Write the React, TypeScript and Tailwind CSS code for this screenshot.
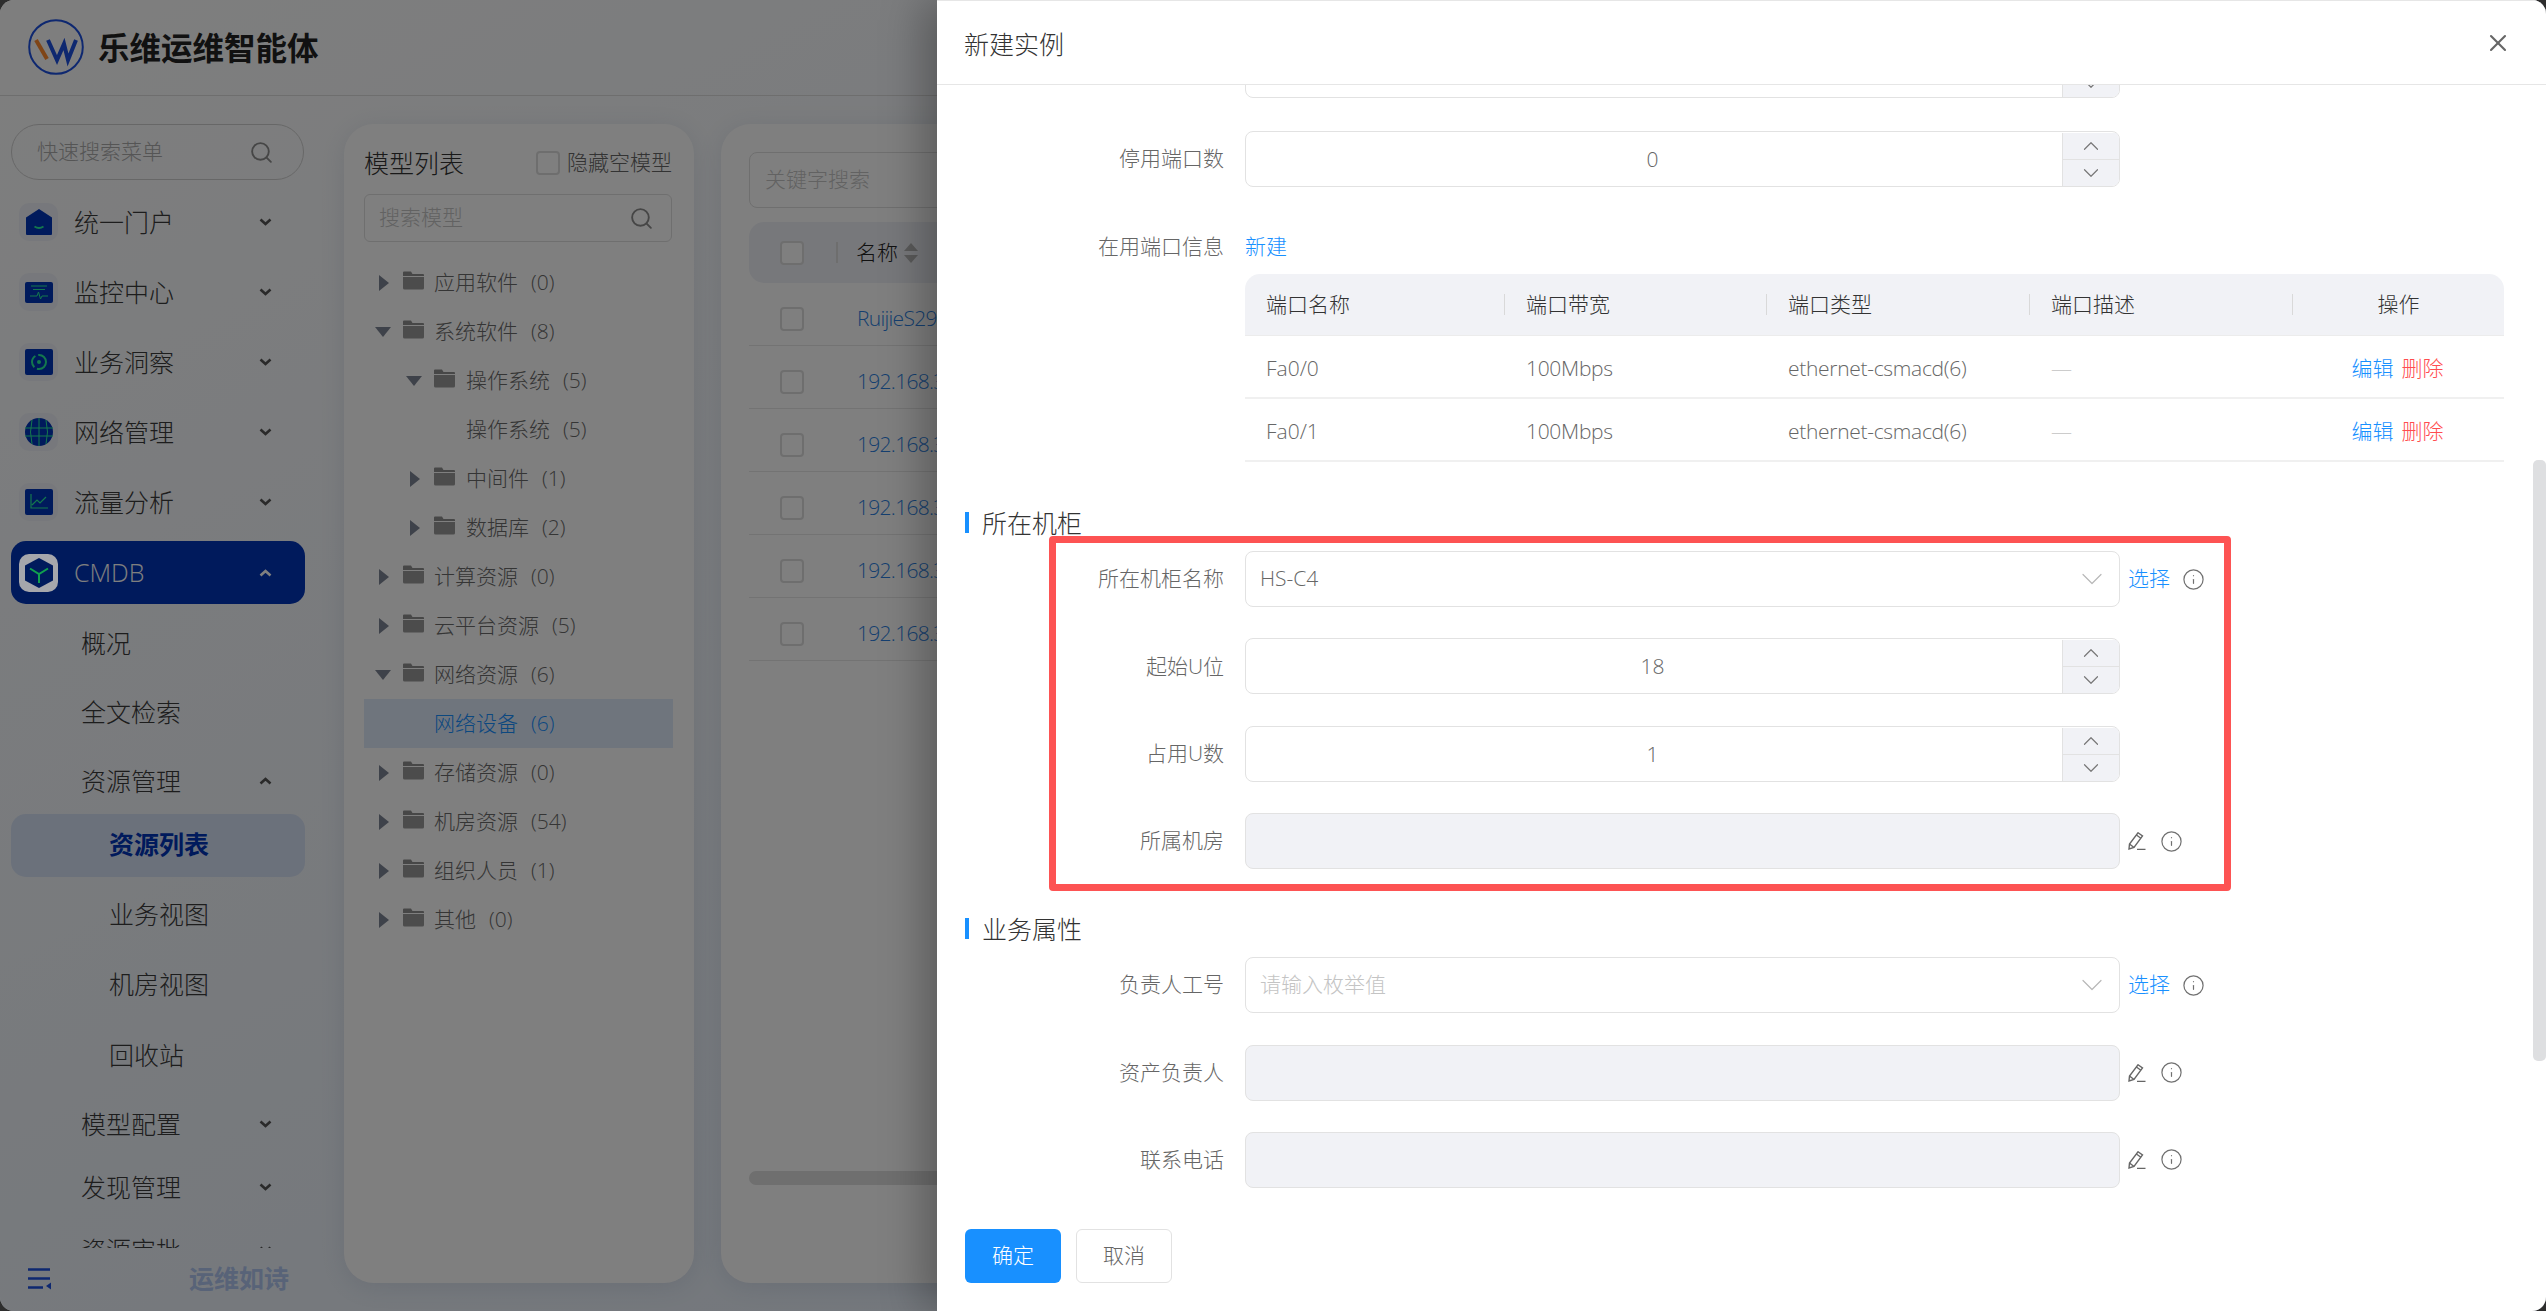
import React from 'react';
import { ChevronDown, ChevronUp, Info, Search, X } from 'lucide-react';

const Caret = ({ open }: { open?: boolean }) =>
  open ? (
    <svg width="16" height="10" viewBox="0 0 16 10" className="ml-[-4px]"><path d="M0 0h16L8 10z" fill="#7d8594" /></svg>
  ) : (
    <svg width="10" height="16" viewBox="0 0 10 16"><path d="M0 0l10 8-10 8z" fill="#7d8594" /></svg>
  );

const Folder = () => (
  <svg width="21" height="20" viewBox="0 0 21 20" className="mt-[-6px] shrink-0">
    <path d="M1 1.500h7l1.500 2.500H20a1 1 0 0 1 1 1v1H0V2.500a1 1 0 0 1 1-1z" fill="#8f8f8f" />
    <path d="M0 7h21v11a1.500 1.500 0 0 1-1.500 1.500h-18A1.500 1.500 0 0 1 0 18z" fill="#989898" />
  </svg>
);

function TreeItem({ label, count, level = 0, open, leaf, active }: { label: string; count: number; level?: number; open?: boolean; leaf?: boolean; active?: boolean }) {
  return (
    <div className={`flex h-[49px] items-center ${level === 1 ? 'pl-[46px]' : 'pl-[15px]'} ${active ? 'bg-[#dfeafb] text-[#1890ff]' : 'text-[#6a6a6a]'}`}>
      <div className="flex w-[24px] shrink-0 items-center">{!leaf && <Caret open={open} />}</div>
      <div className="w-[21px] shrink-0">{!leaf && <Folder />}</div>
      <span className={`whitespace-nowrap text-[21px] ${level === 1 ? 'ml-[11px]' : 'ml-[10px]'}`}>{label}</span>
      <span className="ml-[13px] text-[21px]">({count})</span>
    </div>
  );
}

function ArrowIcon({ up, light }: { up?: boolean; light?: boolean }) {
  return (
    <svg width="13" height="8" viewBox="0 0 13 8" fill="none" stroke={light ? '#ffffff' : '#555555'} strokeWidth="2.6" className={up ? '' : 'rotate-180'}>
      <path d="M1.500 6.500l5-4.500 5 4.500" />
    </svg>
  );
}

function MenuRow({ label, icon, open, height, indent }: { label: string; icon?: React.ReactNode; open?: boolean; height: string; indent?: string }) {
  return (
    <div className={`flex w-[294px] items-center justify-between pr-[33px] ${height}`}>
      <div className={`flex items-center ${indent ?? 'pl-[8px]'}`}>
        {icon}
        <span className="whitespace-nowrap pt-[2px] text-[25px] text-[#3a3a3a]">{label}</span>
      </div>
      {open !== undefined && <ArrowIcon up={open} />}
    </div>
  );
}

const Tile = ({ children }: { children: React.ReactNode }) => (
  <div className="mr-[16px] flex h-[38px] w-[39px] items-center justify-center rounded-[10px] bg-[#eef1f8]">{children}</div>
);

const homeIcon = (
  <Tile>
    <svg width="26" height="26" viewBox="0 0 26 26">
      <path d="M13 0l13 8.500V25a1 1 0 0 1-1 1H1a1 1 0 0 1-1-1V8.500z" fill="#0034b8" />
      <path d="M8.500 17.500q4.500 3 9 0" stroke="#28f09a" strokeWidth="1.800" fill="none" />
    </svg>
  </Tile>
);
const monitorIcon = (
  <Tile>
    <svg width="28" height="21" viewBox="0 0 28 21">
      <rect width="28" height="21" rx="2" fill="#0034b8" />
      <path d="M6 4h16M8 7.500h12M5 14h7l1.500-4 2 7 1.500-3h6" stroke="#28f09a" strokeWidth="1" fill="none" />
    </svg>
  </Tile>
);
const insightIcon = (
  <Tile>
    <svg width="28" height="26" viewBox="0 0 28 26">
      <rect width="28" height="26" rx="2" fill="#0034b8" />
      <circle cx="14" cy="13" r="7" stroke="#28f09a" strokeWidth="2" fill="none" strokeDasharray="13 3" />
      <circle cx="14" cy="13" r="2" fill="#28f09a" />
    </svg>
  </Tile>
);
const globeIcon = (
  <Tile>
    <svg width="28" height="28" viewBox="0 0 28 28">
      <circle cx="14" cy="14" r="14" fill="#0034b8" />
      <path d="M0 10h28M0 18h28M14 0v28M7 2q-3 12 0 24M21 2q3 12 0 24" stroke="#28f09a" strokeWidth="1" fill="none" />
    </svg>
  </Tile>
);
const flowIcon = (
  <Tile>
    <svg width="28" height="26" viewBox="0 0 28 26">
      <rect width="28" height="26" rx="2" fill="#0034b8" />
      <path d="M6 5v14h17M7 16l5-5 3 3 6-6" stroke="#28f09a" strokeWidth="1.200" fill="none" />
    </svg>
  </Tile>
);

const InfoIcon = () => <Info size={23} strokeWidth={1.25} className="text-[#707070]" />;

const PencilIcon = () => (
  <svg width="18" height="18" viewBox="0 0 18 18" fill="none" stroke="#666666" strokeWidth="1.400" className="shrink-0">
    <path d="M1 17l.5-5L10 .8 14.500 4 6 15.500z" />
    <path d="M1.500 12L6 15.500M8.400 3l4.500 3.200M9 17.500h8.500" />
  </svg>
);

function FieldBox({ kind, value, placeholder }: { kind: 'number' | 'select' | 'disabled'; value?: string; placeholder?: string }) {
  if (kind === 'number') {
    return (
      <div className="flex h-[56px] w-[875px] shrink-0 overflow-hidden rounded-[8px] border-[1.5px] border-[#e2e2e2]">
        <div className="flex flex-1 items-center justify-center pt-[1px] pr-[3px] text-[21px] text-[#666666]">{value}</div>
        <div className="mt-[1px] flex w-[57px] flex-col border-l-[1.5px] border-[#e2e2e2] bg-[#f1f2f6] text-[#777777]">
          <div className="flex flex-1 items-center justify-center border-b-[1.5px] border-[#e2e2e2]"><ChevronUp size={26} strokeWidth={1.1} /></div>
          <div className="flex flex-1 items-center justify-center"><ChevronDown size={26} strokeWidth={1.1} /></div>
        </div>
      </div>
    );
  }
  if (kind === 'select') {
    return (
      <div className="flex h-[56px] w-[875px] shrink-0 items-center justify-between rounded-[8px] border-[1.5px] border-[#e2e2e2] pl-[14px] pr-[9px]">
        <span className={`text-[21px] ${value ? 'text-[#666666]' : 'text-[#c4c4c4]'}`}>{value ?? placeholder}</span>
        <ChevronDown size={36} strokeWidth={0.8} className="text-[#b8b8b8]" />
      </div>
    );
  }
  return <div className="h-[56px] w-[875px] shrink-0 rounded-[8px] border-[1.5px] border-[#e2e2e2] bg-[#f1f2f6]" />;
}

function FormRow({ label, kind, value, placeholder, className }: { label: string; kind: 'number' | 'select' | 'disabled'; value?: string; placeholder?: string; className?: string }) {
  return (
    <div className={`flex h-[56px] shrink-0 items-center ${className ?? ''}`}>
      <div className="w-[287px] shrink-0 text-right text-[21px] text-[#666666]">{label}</div>
      <div className="ml-[21px]">
        <FieldBox kind={kind} value={value} placeholder={placeholder} />
      </div>
      {kind === 'select' && (
        <div className="ml-[8px] flex items-center">
          <span className="text-[21px] text-[#1890ff]">选择</span>
          <span className="ml-[12px]"><InfoIcon /></span>
        </div>
      )}
      {kind === 'disabled' && (
        <div className="ml-[8px] flex items-center">
          <PencilIcon />
          <span className="ml-[14px]"><InfoIcon /></span>
        </div>
      )}
    </div>
  );
}

const SectionTitle = ({ label, className }: { label: string; className: string }) => (
  <div className={`ml-[28px] flex h-[21px] shrink-0 items-center ${className}`}>
    <div className="h-[21px] w-[4px] bg-[#1890ff]" />
    <span className="ml-[13px] pt-[2px] text-[25px] text-[#333333]">{label}</span>
  </div>
);

const portRows = [
  { name: 'Fa0/0', speed: '100Mbps', type: 'ethernet-csmacd(6)' },
  { name: 'Fa0/1', speed: '100Mbps', type: 'ethernet-csmacd(6)' },
];

const Box = () => <div className="h-[24px] w-[24px] shrink-0 rounded-[4px] border-[2px] border-[#dcdcdc] bg-white" />;

export default function App() {
  return (
    <div className="h-screen w-screen overflow-hidden bg-[#2e2e2e] font-light [font-family:'Open_Sans','Noto_Sans_CJK_SC',sans-serif]">
      <div className="relative flex h-full w-full flex-col overflow-hidden rounded-[14px] bg-linear-to-br from-[#fdfdfd] to-[#dfeaf8]">
        {/* header */}
        <div className="flex h-[96px] shrink-0 items-center border-b border-[#dcdcdc] pl-[28px]">
          <svg width="56" height="56" viewBox="0 0 56 56" fill="none" className="mb-[2px]">
            <circle cx="28" cy="28" r="26.800" stroke="#1d50e0" strokeWidth="2" />
            <path d="M8 21l11 19" stroke="#ff8a2e" strokeWidth="4" />
            <path d="M20 21l9 20 7-16 4 16 8-20" stroke="#1d50e0" strokeWidth="4" />
          </svg>
          <span className="ml-[14px] text-[31.5px] font-bold text-[#222222]">乐维运维智能体</span>
        </div>

        <div className="flex min-h-0 flex-1">
          {/* sidebar */}
          <div className="flex w-[344px] shrink-0 flex-col pl-[11px]">
            <div className="mt-[28px] flex h-[56px] w-[293px] shrink-0 items-center justify-between rounded-full border-[1.5px] border-[#cfcfcf] pl-[25px] pr-[29px]">
              <span className="text-[21px] text-[#aaaaaa]">快速搜索菜单</span>
              <Search size={25} strokeWidth={1.8} className="text-[#8c8c8c]" />
            </div>
            <div className="mt-[7px] min-h-0 flex-1 overflow-hidden">
              <MenuRow label="统一门户" icon={homeIcon} open={false} height="h-[70px]" />
              <MenuRow label="监控中心" icon={monitorIcon} open={false} height="h-[70px]" />
              <MenuRow label="业务洞察" icon={insightIcon} open={false} height="h-[70px]" />
              <MenuRow label="网络管理" icon={globeIcon} open={false} height="h-[70px]" />
              <MenuRow label="流量分析" icon={flowIcon} open={false} height="h-[70px]" />
              <div className="mt-[4px]">
                <div className="flex h-[63px] w-[294px] items-center justify-between rounded-[15px] bg-[#0034b8] pl-[8px] pr-[33px]">
                  <div className="flex items-center">
                    <div className="relative z-20 mr-[16px] flex h-[38px] w-[39px] items-center justify-center rounded-[10px] bg-[#a6a7ac]">
                      <svg width="28" height="30" viewBox="0 0 28 30">
                        <path d="M14 0l14 7.500v15L14 30 0 22.500V7.500z" fill="#001a5c" />
                        <path d="M5 10.500l9 5.500 9-5.500M14 16v9" stroke="#11a04e" strokeWidth="2" fill="none" />
                      </svg>
                    </div>
                    <span className="text-[25px] text-white">CMDB</span>
                  </div>
                  <ArrowIcon up light />
                </div>
              </div>
              <div className="mt-[4px]">
                <MenuRow label="概况" height="h-[69px]" indent="pl-[70px]" />
                <MenuRow label="全文检索" height="h-[70px]" indent="pl-[70px]" />
                <MenuRow label="资源管理" open height="h-[67px]" indent="pl-[70px]" />
              </div>
              <div className="flex h-[63px] w-[294px] items-center rounded-[15px] bg-[#d6e2f6] pb-[2px] pl-[98px]">
                <span className="text-[25px] font-bold text-[#0034b8]">资源列表</span>
              </div>
              <div className="mt-[2px]">
                <MenuRow label="业务视图" height="h-[70px]" indent="pl-[98px]" />
                <MenuRow label="机房视图" height="h-[69px]" indent="pl-[98px]" />
                <MenuRow label="回收站" height="h-[74px]" indent="pl-[98px]" />
              </div>
              <MenuRow label="模型配置" open={false} height="h-[63px]" indent="pl-[70px]" />
              <MenuRow label="发现管理" open={false} height="h-[63px]" indent="pl-[70px]" />
              <MenuRow label="资源审批" open={false} height="h-[63px]" indent="pl-[70px]" />
            </div>
            <div className="flex h-[63px] shrink-0 items-center pb-[2px]">
              <svg width="24" height="22" viewBox="0 0 24 22" className="ml-[17px]">
                <path d="M0 1.500h22M0 10.500h22M0 19.500h15" stroke="#1d50e0" strokeWidth="2.400" />
                <path d="M23 14.500v7l-5-3.500z" fill="#1d50e0" />
              </svg>
              <span className="ml-[137px] text-[25px] font-bold text-[#b0c6f0]">运维如诗</span>
            </div>
          </div>

          {/* model list + table panels */}
          <div className="flex min-w-0 flex-1 gap-[27px] pt-[28px] pb-[28px]">
            <div className="flex w-[350px] shrink-0 flex-col rounded-[30px] bg-white pl-[20px] pr-[21px] shadow-[0_4px_24px_rgba(60,80,120,0.12)]">
              <div className="mt-[24px] flex h-[30px] shrink-0 items-center justify-between pr-[1px]">
                <span className="pt-[2px] text-[25px] text-[#333333]">模型列表</span>
                <div className="flex items-center">
                  <Box />
                  <span className="ml-[7px] text-[21px] text-[#666666]">隐藏空模型</span>
                </div>
              </div>
              <div className="mt-[16px] flex h-[48px] w-[308px] shrink-0 items-center justify-between rounded-[6px] border-[1.5px] border-[#dedede] pl-[14px] pr-[17px]">
                <span className="text-[21px] text-[#c4c4c4]">搜索模型</span>
                <Search size={25} strokeWidth={1.8} className="text-[#8c8c8c]" />
              </div>
              <div className="mt-[16px]">
                <TreeItem label="应用软件" count={0} />
                <TreeItem label="系统软件" count={8} open />
                <TreeItem label="操作系统" count={5} level={1} open />
                <TreeItem label="操作系统" count={5} level={1} leaf />
                <TreeItem label="中间件" count={1} level={1} />
                <TreeItem label="数据库" count={2} level={1} />
                <TreeItem label="计算资源" count={0} />
                <TreeItem label="云平台资源" count={5} />
                <TreeItem label="网络资源" count={6} open />
                <TreeItem label="网络设备" count={6} leaf active />
                <TreeItem label="存储资源" count={0} />
                <TreeItem label="机房资源" count={54} />
                <TreeItem label="组织人员" count={1} />
                <TreeItem label="其他" count={0} />
              </div>
            </div>

            <div className="flex min-w-0 flex-1 flex-col rounded-[30px] bg-white px-[28px] pt-[28px] shadow-[0_4px_24px_rgba(60,80,120,0.12)]">
              <div className="flex h-[56px] w-[420px] shrink-0 items-center rounded-[8px] border-[1.5px] border-[#dedede] pl-[15px]">
                <span className="text-[21px] text-[#c4c4c4]">关键字搜索</span>
              </div>
              <div className="mt-[14px] flex h-[61px] shrink-0 items-center rounded-[15px] bg-[#eff1f7] pl-[31px]">
                <Box />
                <div className="ml-[32px] h-[21px] w-[2px] bg-[#dcdcdc]" />
                <span className="ml-[18px] text-[21px] text-[#222222]">名称</span>
                <svg width="14" height="20" viewBox="0 0 14 20" className="ml-[6px]">
                  <path d="M7 0l7 8H0zM7 20l7-8H0z" fill="#b4b4b4" />
                </svg>
              </div>
              {['RuijieS2952-24', '192.168.3.11', '192.168.3.12', '192.168.3.13', '192.168.3.14', '192.168.3.15'].map((name) => (
                <div key={name} className="flex h-[63px] shrink-0 items-center border-b border-[#e6e6e6] pt-[9px] pl-[31px]">
                  <Box />
                  <span className="ml-[53px] whitespace-nowrap text-[21px] tracking-[-0.7px] text-[#2a7fe0]">{name}</span>
                </div>
              ))}
              <div className="mt-auto mb-[98px] h-[14px] w-full shrink-0 rounded-full bg-[#dedede]" />
            </div>
          </div>
        </div>

        {/* modal mask */}
        <div className="absolute inset-0 z-10 bg-black/50" />

        {/* drawer */}
        <div className="absolute top-0 right-0 bottom-0 z-30 flex w-[1609px] flex-col bg-white shadow-[-14px_0_40px_rgba(0,0,0,0.28)]">
          <div className="flex h-[85px] shrink-0 items-center justify-between border-t border-b border-[#e6e6e6] pl-[27px] pr-[34px]">
            <span className="pt-[5px] text-[25px] text-[#333333]">新建实例</span>
            <X size={28} strokeWidth={1.8} className="text-[#666666]" />
          </div>

          <div className="flex min-h-0 flex-1 flex-col overflow-hidden">
            <div className="flex h-[13px] shrink-0 flex-col justify-end overflow-hidden">
              <div className="pl-[308px]"><FieldBox kind="number" /></div>
            </div>
            <FormRow label="停用端口数" kind="number" value="0" className="mt-[33px]" />
            <div className="mt-[45px] flex h-[30px] shrink-0 items-center">
              <div className="w-[287px] text-right text-[21px] text-[#666666]">在用端口信息</div>
              <span className="ml-[21px] text-[21px] text-[#1890ff]">新建</span>
            </div>
            <div className="mt-[12px] ml-[308px] w-[1259px] shrink-0">
              <div className="grid h-[62px] grid-cols-[260px_262px_263px_263px_211px] items-center rounded-t-[15px] border-b border-[#ececec] bg-[#f1f2f6] text-[21px] text-[#333333]">
                {['端口名称', '端口带宽', '端口类型', '端口描述'].map((h) => (
                  <div key={h} className="flex h-[21px] items-center border-r border-[#d9d9d9] pl-[21px]">{h}</div>
                ))}
                <div className="text-center">操作</div>
              </div>
              {portRows.map((r) => (
                <div key={r.name} className="grid h-[63px] grid-cols-[260px_262px_263px_263px_211px] items-center border-b-[2px] border-[#f0f0f0] pt-[5px] text-[21px] text-[#666666]">
                  <div className="pl-[21px]">{r.name}</div>
                  <div className="pl-[21px] tracking-[-0.3px]">{r.speed}</div>
                  <div className="pl-[21px] tracking-[-0.3px]">{r.type}</div>
                  <div className="pl-[21px] text-[#cccccc]">—</div>
                  <div className="flex justify-center gap-[8px] pr-[2px]">
                    <span className="text-[#1890ff]">编辑</span>
                    <span className="text-[#ff4d4f]">删除</span>
                  </div>
                </div>
              ))}
            </div>

            <SectionTitle label="所在机柜" className="mt-[50px]" />
            <FormRow label="所在机柜名称" kind="select" value="HS-C4" className="mt-[18px]" />
            <FormRow label="起始U位" kind="number" value="18" className="mt-[31.4px]" />
            <FormRow label="占用U数" kind="number" value="1" className="mt-[31.4px]" />
            <FormRow label="所属机房" kind="disabled" className="mt-[31.4px]" />

            <SectionTitle label="业务属性" className="mt-[49px]" />
            <FormRow label="负责人工号" kind="select" placeholder="请输入枚举值" className="mt-[18px]" />
            <FormRow label="资产负责人" kind="disabled" className="mt-[31.4px]" />
            <FormRow label="联系电话" kind="disabled" className="mt-[31.4px]" />
          </div>

          <div className="flex h-[101px] shrink-0 items-start gap-[15px] pl-[28px] pt-[19px]">
            <button className="flex h-[54px] w-[96px] items-center justify-center rounded-[6px] bg-[#1890ff] text-[21px] text-white">确定</button>
            <button className="flex h-[54px] w-[96px] items-center justify-center rounded-[6px] border-[1.5px] border-[#e2e2e2] text-[21px] text-[#666666]">取消</button>
          </div>

          {/* drawer scrollbar */}
          <div className="absolute top-[460px] right-0 h-[601px] w-[13px] rounded-[5px] bg-[#dedfe1]" />
          {/* red annotation frame from the screenshot */}
          <div className="absolute top-[536px] left-[112px] h-[355px] w-[1182px] rounded-[4px] border-[7px] border-[#fd5353]" />
        </div>
      </div>
    </div>
  );
}
